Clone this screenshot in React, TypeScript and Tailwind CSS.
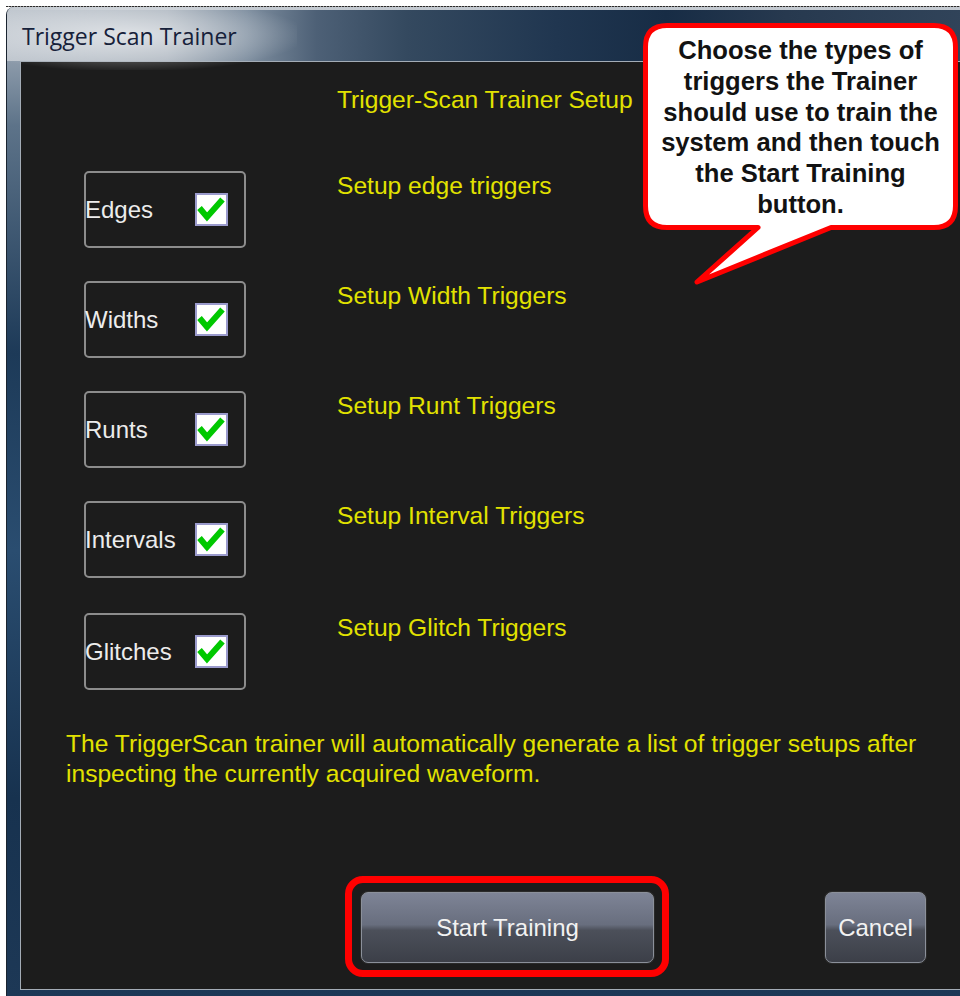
import React from "react";

type Row = { label: string; text: string; extra?: string };

const rows: Row[] = [
  { label: "Edges", text: "Setup edge triggers" },
  { label: "Widths", text: "Setup Width Triggers" },
  { label: "Runts", text: "Setup Runt Triggers" },
  { label: "Intervals", text: "Setup Interval Triggers" },
  { label: "Glitches", text: "Setup Glitch Triggers", extra: "mt-[2px]" },
];

function CheckBox() {
  return (
    <div className="ml-auto mr-[16px] h-[33px] w-[33px] border-2 border-[#9a9acc] bg-white">
      <svg viewBox="0 0 29 29" className="h-full w-full">
        <polyline
          points="2.5,13 10,22 25.5,4.5"
          fill="none"
          stroke="#00c800"
          strokeWidth="6"
          strokeLinejoin="miter"
        />
      </svg>
    </div>
  );
}

function TriggerRow({ row }: { row: Row }) {
  return (
    <div className={`flex items-start ${row.extra ?? ""}`}>
      <div className="ml-[63px] flex h-[77px] w-[162px] items-center rounded-[5px] border-2 border-[#8c8c8c]">
        <span className="-ml-[1px] text-[24px] leading-[28px] text-[#ececec]">{row.label}</span>
        <CheckBox />
      </div>
      <span className="ml-[91px] mt-[1px] text-[24.6px] leading-[28px] text-[#e2e200]">{row.text}</span>
    </div>
  );
}

function GlassButton({ label, className }: { label: string; className: string }) {
  return (
    <button
      className={`flex h-[71px] items-center justify-center rounded-[7px] border border-[#8b909a] bg-[linear-gradient(180deg,#7e8496_0%,#686e7e_46%,#4c505a_54%,#3c3f48_100%)] text-[24px] text-[#f2f2f2] shadow-[0_0_0_1px_#2a2a2a] ${className}`}
    >
      {label}
    </button>
  );
}

export default function App() {
  return (
    <div className="relative h-[996px] w-[960px] overflow-hidden bg-white font-['Liberation_Sans',Arial,sans-serif]">
      <div className="pl-[6px] pt-[6px]">
        {/* dotted edge of the desktop behind the window */}
        <div className="h-px bg-[repeating-linear-gradient(90deg,#2a2a2a_0_2px,#9a9a9a_2px_3px)]" />
        {/* window frame */}
        <div className="flex h-[989px] w-[1000px] flex-col overflow-hidden rounded-tl-[8px] border-l border-[#1a2430] bg-[linear-gradient(180deg,#b4bcc6_0%,#5d7389_12%,#1d3a58_35%,#2a4d70_55%,#17324f_80%,#1d3856_100%)] pb-[6px]">
          {/* title bar */}
          <div className="relative flex h-[54px] items-center border-t-[3px] border-[#c3c9d0] bg-[linear-gradient(90deg,#bfc6ce_0%,#aab3bd_16%,#7f8fa0_24%,#4d6076_31%,#34495f_40%,#203650_55%,#172c45_66%,#27394f_78%,#33465c_100%)] pl-[15px]">
            <div className="absolute left-0 top-[-10px] h-[70px] w-[290px] bg-[radial-gradient(ellipse_at_42%_50%,rgba(255,255,255,0.6)_0%,rgba(255,255,255,0.25)_45%,rgba(255,255,255,0)_75%)]" />
            <span className="relative mt-[2px] font-['Open_Sans','Noto_Sans',sans-serif] text-[23px] text-[#16213a]">
              Trigger Scan Trainer
            </span>
          </div>
          {/* dialog body */}
          <div className="ml-[13px] flex flex-1 flex-col border border-[#a3acb6] bg-[#1c1c1c]">
            <div className="pl-[316px] pt-[24px] text-[24.6px] leading-[28px] text-[#e2e200]">
              Trigger-Scan Trainer Setup
            </div>
            <div className="mt-[57px] flex flex-col gap-[33px]">
              {rows.map((r) => (
                <TriggerRow key={r.label} row={r} />
              ))}
            </div>
            <p className="mt-[39px] pl-[45px] text-[24.6px] leading-[30px] text-[#e2e200]">
              The TriggerScan trainer will automatically generate a list of trigger setups after
              <br />
              inspecting the currently acquired waveform.
            </p>
            <div className="mt-[103px] flex items-start">
              <div className="relative ml-[340px]">
                <GlassButton label="Start Training" className="w-[293px]" />
                <div className="pointer-events-none absolute -bottom-[14px] -left-[16px] -right-[15px] -top-[16px] rounded-[18px] border-[7px] border-[#ff0000]" />
              </div>
              <GlassButton label="Cancel" className="ml-[171px] w-[101px]" />
            </div>
          </div>
        </div>
      </div>

      {/* speech bubble */}
      <svg className="pointer-events-none absolute left-0 top-0 h-[300px] w-[960px]" viewBox="0 0 960 300">
        <path
          d="M 667 25.5 H 934 Q 955.5 25.5 955.5 47 V 206 Q 955.5 227.5 934 227.5 H 831 L 697 282 L 758 227.5 H 667 Q 645.5 227.5 645.5 206 V 47 Q 645.5 25.5 667 25.5 Z"
          fill="#ffffff"
          stroke="#ff0000"
          strokeWidth="5"
          strokeLinejoin="round"
        />
      </svg>
      <div className="absolute left-[648px] top-[35px] w-[305px] text-center text-[25.6px] font-bold leading-[30.8px] text-[#121212]">
        Choose the types of
        <br />
        triggers the Trainer
        <br />
        should use to train the
        <br />
        system and then touch
        <br />
        the Start Training
        <br />
        button.
      </div>
    </div>
  );
}
